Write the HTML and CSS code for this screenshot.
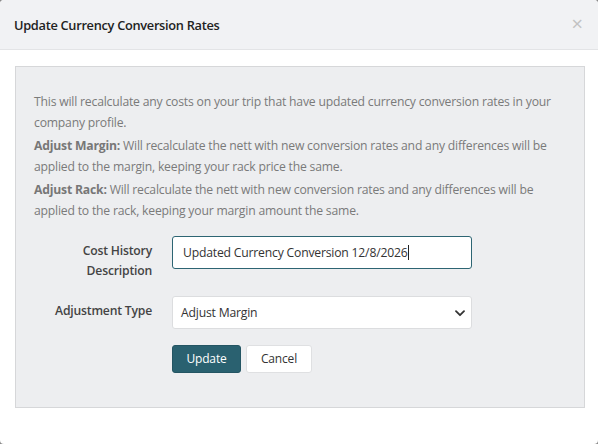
FILE: index.html
```html
<!DOCTYPE html>
<html>
<head>
<meta charset="utf-8">
<link rel="stylesheet" href="styles.css">
</head>
<body>
<div class="modal">
  <div class="modal-header">
    <div class="modal-title">Update Currency Conversion Rates</div>
    <div class="close">&times;</div>
  </div>
  <div class="modal-body">
    <div class="panel">
      <p>This will recalculate any costs on your trip that have updated currency conversion rates in your company profile.</p>
      <p><b>Adjust Margin:</b><span> Will recalculate the nett with new conversion rates and any differences will be applied to the margin, keeping your rack price the same.</span></p>
      <p><b>Adjust Rack:</b><span> Will recalculate the nett with new conversion rates and any differences will be applied to the rack, keeping your margin amount the same.</span></p>
      <div class="form-row first">
        <label class="label">Cost History<br>Description</label>
        <div class="control"><div class="input focused">Updated Currency Conversion 12/8/2026<span class="caret"></span></div></div>
      </div>
      <div class="form-row">
        <label class="label">Adjustment Type</label>
        <div class="control"><div class="input select">Adjust Margin<svg class="chev" width="10" height="7" viewBox="0 0 10 7"><path d="M1 1.2 L5 5.2 L9 1.2" fill="none" stroke="#333" stroke-width="1.8" stroke-linecap="round" stroke-linejoin="round"/></svg></div></div>
      </div>
      <div class="buttons">
        <button class="btn primary">Update</button>
        <button class="btn default">Cancel</button>
      </div>
    </div>
  </div>
</div>
</body>
</html>
```
FILE: styles.css
```css
html, body { margin: 0; padding: 0; }
body {
  width: 598px; height: 444px; overflow: hidden;
  background: #8a8a8a;
  font-family: "Open Sans", "Noto Sans", sans-serif;
}
.modal {
  width: 598px; height: 444px; background: #fff;
  border-radius: 4px; overflow: hidden;
}
.modal-header {
  height: 49px; background: #f1f2f4; border-bottom: 1px solid #e3e4e6;
  display: flex; align-items: center; justify-content: space-between;
  padding: 0 15px 0 14px; box-sizing: content-box;
}
.modal-title { font-size: 12.8px; font-weight: 600; color: #222; letter-spacing: -0.3px; }
.close { font-size: 20px; color: #c2c2c2; line-height: 1; margin-top: -2px; }
.modal-body { padding: 16px 13px 0 15px; }
.panel {
  background: #edeef0; border: 1px solid #d6d7d9;
  height: 342px; box-sizing: border-box; padding: 25px 18px 0 18px;
}
.panel p { margin: 0 0 3px; font-size: 12.2px; line-height: 20.6px; color: #7a7a7a; letter-spacing: -0.2px; }
.panel p b { font-weight: 700; color: #777; }
.form-row { display: flex; align-items: flex-start; margin-top: 15px; }
.form-row.first { margin-top: 14px; }
.label {
  width: 118px; text-align: right; font-size: 12.2px; font-weight: 600; color: #444;
  line-height: 20px; padding-top: 5px; letter-spacing: -0.2px;
}
.control { margin-left: 20px; }
.input {
  width: 300px; height: 33px; box-sizing: border-box; background: #fff;
  border: 1px solid #dcdddf; border-radius: 3px; font-size: 12.2px; color: #333;
  display: flex; align-items: center; padding: 0 10px; position: relative; letter-spacing: -0.2px;
}
.input.focused { border-color: #2d6573; }
.caret { display: inline-block; width: 1px; height: 15px; background: #222; margin-left: 0; }
.select { padding-left: 8px; }
.chev { position: absolute; right: 6px; top: 13px; }
.buttons { display: flex; gap: 5px; margin-left: 138px; margin-top: 16px; }
.btn {
  height: 28px; font-family: inherit; font-size: 12px; border-radius: 3px; padding: 0 10px;
  letter-spacing: -0.15px;
}
.primary { background: #2a6170; color: #fff; border: 1px solid #245563; width: 69px; font-weight: 500; }
.default { background: #fff; color: #333; border: 1px solid #dfe0e2; width: 66px; }
```
